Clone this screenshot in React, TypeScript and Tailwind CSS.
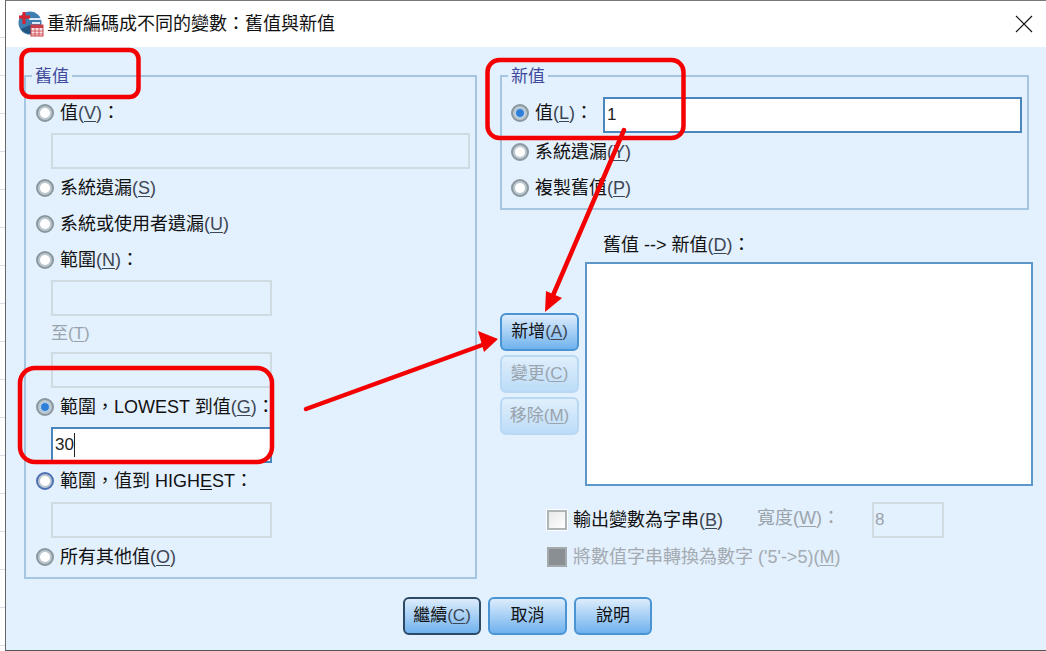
import type { ReactNode } from 'react';

const FONT = 'font-["Liberation_Sans","Noto_Sans_CJK_TC",sans-serif]';

const Mn = ({ pre, k, off }: { pre: ReactNode; k: string; off?: boolean }) => (
  <>
    {pre}
    <span className={off ? '' : 'text-[#3d4654]'}>
      (<u className="underline underline-offset-2">{k}</u>)
    </span>
  </>
);

const Radio = ({ checked, focus }: { checked?: boolean; focus?: boolean }) => (
  <span
    className={`flex h-[18px] w-[18px] shrink-0 items-center justify-center rounded-full border-2 bg-[#bcc8d0] ${
      focus ? 'border-[#4d6fb3]' : 'border-[#8b979f]'
    }`}
  >
    {checked ? (
      <span className="h-[10px] w-[10px] rounded-full border border-[#b9d5f0] bg-[#2f7fd6]" />
    ) : (
      <span className="h-[10px] w-[10px] rounded-full bg-white" />
    )}
  </span>
);

const RadioRow = ({ children, checked, focus }: { children: ReactNode; checked?: boolean; focus?: boolean }) => (
  <div className="flex h-9 items-center gap-[6px]">
    <Radio checked={checked} focus={focus} />
    <span className="whitespace-nowrap text-[18px] text-[#111]">{children}</span>
  </div>
);

const DisabledInput = ({ w = 'w-[221px]' }: { w?: string }) => (
  <div className={`ml-[15px] h-9 border-2 border-[#d0dae1] bg-[#e3f0fd] ${w}`} />
);

const Btn = ({ children, w = 'w-[79px]', off, main }: { children: ReactNode; w?: string; off?: boolean; main?: boolean }) => (
  <div
    className={`flex h-[38px] items-center justify-center rounded-[6px] text-[17px] ${w} ${
      off
        ? 'border-2 border-[#b9d8f3] bg-gradient-to-b from-[#e0effc] to-[#bcdcf8] text-[#9aa3ab]'
        : main
          ? 'border-2 border-[#2c4a66] bg-gradient-to-b from-[#dcecfb] to-[#6fb2ee] text-[#111]'
          : 'border-2 border-[#4a94d4] bg-gradient-to-b from-[#dcecfb] to-[#6fb2ee] text-[#111]'
    }`}
  >
    {children}
  </div>
);

const Group = ({ title, className, legend, children }: { title: string; className: string; legend: string; children: ReactNode }) => (
  <fieldset className={`border-2 border-[#a6c5e0] ${className}`}>
    <legend className={`px-[3px] pt-[2px] text-[17px] leading-[20px] text-[#3f4a9c] ${legend}`}>{title}</legend>
    {children}
  </fieldset>
);

const Annotations = () => (
  <svg className="pointer-events-none absolute inset-0" width="1046" height="651" viewBox="0 0 1046 651" fill="none">
    <g stroke="#f40000" strokeWidth="4.5">
      <rect x="21.5" y="50" width="117" height="47" rx="9" />
      <rect x="487.5" y="60" width="196" height="78" rx="12" />
      <rect x="20" y="368" width="252" height="94" rx="15" />
      <path d="M624 130 L551 300" strokeLinecap="round" />
      <path d="M306 409 L485 344" strokeLinecap="round" />
    </g>
    <path d="M545 312 L546 291 L562 298 Z" fill="#f40000" />
    <path d="M498 339 L478 331 L484 352 Z" fill="#f40000" />
  </svg>
);

const AppIcon = () => (
  <svg width="26" height="26" viewBox="0 0 26 26" className="shrink-0">
    <circle cx="12" cy="12" r="11.5" fill="#3f7fb0" />
    <path d="M3 18 A11.5 11.5 0 0 0 20 20 L20 14 L12 14 Z" fill="#22557f" />
    <path d="M11 8 h12 M14 12 h8" stroke="#dcebf5" strokeWidth="2" />
    <path d="M6 1 v12 M1 6 h11" stroke="#d8232f" strokeWidth="3" />
    <rect x="13" y="14" width="12" height="11" fill="#fbe3e3" stroke="#c9404a" />
    <rect x="13" y="14" width="12" height="3" fill="#c9404a" />
    <path d="M17 17 v8 M21 17 v8 M13 20 h12 M13 23 h12" stroke="#c9404a" strokeWidth="0.8" />
  </svg>
);

export default function App() {
  return (
    <div className={`relative flex h-[651px] w-[1046px] overflow-hidden bg-white ${FONT}`}>
      {/* sliver of the data sheet behind the dialog */}
      <div className="w-[5px] shrink-0 bg-[repeating-linear-gradient(to_bottom,#ffffff_0px,#ffffff_37px,#d5dde6_37px,#d5dde6_38px,#ffffff_38px,#ffffff_38px)]" />

      <div className="flex min-w-0 flex-1 flex-col border-t border-b border-l border-t-[#777] border-b-[#555] border-l-[#666]">
        <div className="flex h-[46px] shrink-0 items-center bg-white pl-[12px] pr-[13px]">
          <AppIcon />
          <span className="ml-[3px] text-[18px] text-[#111]">重新編碼成不同的變數：舊值與新值</span>
          <svg className="ml-auto" width="18" height="18" viewBox="0 0 18 18" stroke="#111" strokeWidth="1.1">
            <path d="M1 1 L17 17 M17 1 L1 17" />
          </svg>
        </div>

        <div className="flex flex-1 flex-col bg-[#e3f0fd]">
          <div className="flex gap-[23px] pl-[18px] pt-[18px]">
            <Group title="舊值" legend="-ml-[4px]" className="h-[514px] w-[453px] shrink-0 pl-[10px] pt-[8px]">
              <RadioRow><Mn pre="值" k="V" />：</RadioRow>
              <div className="mt-[2px]"><DisabledInput w="w-[419px]" /></div>
              <div className="mt-[1px]"><RadioRow><Mn pre="系統遺漏" k="S" /></RadioRow></div>
              <RadioRow><Mn pre="系統或使用者遺漏" k="U" /></RadioRow>
              <RadioRow><Mn pre="範圍" k="N" />：</RadioRow>
              <div className="mt-[2px]"><DisabledInput /></div>
              <div className="ml-[15px] flex h-9 items-center text-[17px] text-[#9aa3ab]"><Mn pre="至" k="T" off /></div>
              <DisabledInput />
              <div className="mt-[1px]"><RadioRow checked>範圍，LOWEST 到值<Mn pre="" k="G" />：</RadioRow></div>
              <div className="ml-[15px] mt-[2px] flex h-9 w-[221px] items-center border-2 border-[#4a86bd] bg-white pl-[2px] text-[17px] text-[#222]">
                30<span className="h-[24px] w-px bg-[#222]" />
              </div>
              <RadioRow focus>範圍，值到 HIGH<u className="underline underline-offset-2">E</u>ST：</RadioRow>
              <div className="mt-[3px]"><DisabledInput /></div>
              <div className="mt-[1px]"><RadioRow><Mn pre="所有其他值" k="O" /></RadioRow></div>
            </Group>

            <div className="flex w-[533px] shrink-0 flex-col">
              <Group title="新值" legend="-ml-[3px]" className="h-[145px] w-[529px] pl-[9px] pt-[8px]">
                <div className="flex h-9 items-center gap-[6px]">
                  <Radio checked />
                  <span className="w-[62px] whitespace-nowrap text-[18px] text-[#111]"><Mn pre="值" k="L" />：</span>
                  <div className="mt-[4px] flex h-9 w-[419px] items-center border-2 border-[#4a86bd] bg-white pl-[2px] text-[17px] text-[#222]">1</div>
                </div>
                <div className="mt-[3px]"><RadioRow><Mn pre="系統遺漏" k="Y" /></RadioRow></div>
                <RadioRow><Mn pre="複製舊值" k="P" /></RadioRow>
              </Group>

              <div className="flex gap-[6px]">
                <div className="flex w-[79px] shrink-0 flex-col gap-[4px] pt-[103px]">
                  <Btn><Mn pre="新增" k="A" /></Btn>
                  <Btn off><Mn pre="變更" k="C" off /></Btn>
                  <Btn off><Mn pre="移除" k="M" off /></Btn>
                </div>
                <div className="flex w-[448px] flex-col pt-[25px]">
                  <div className="h-[27px] pl-[18px] text-[18px] leading-[20px] text-[#111]">
                    舊值 --&gt; 新值<Mn pre="" k="D" />：
                  </div>
                  <div className="h-[224px] border-2 border-[#5d97c9] bg-white" />
                </div>
              </div>

              <div className="mt-[16px] flex h-9 items-center pl-[47px]">
                <span className="h-[20px] w-[20px] shrink-0 border-2 border-[#aeb5b9] bg-gradient-to-br from-[#e8e8e8] to-white outline outline-1 outline-white" />
                <span className="ml-[6px] w-[184px] text-[18px] text-[#111]"><Mn pre="輸出變數為字串" k="B" /></span>
                <span className="mb-[3px] w-[115px] text-[18px] text-[#9aa3ab]"><Mn pre="寬度" k="W" off />：</span>
                <div className="flex h-9 w-[72px] items-center border-2 border-[#d0dae1] pl-[1px] text-[17px] text-[#9aa3ab]">8</div>
              </div>
              <div className="flex h-[38px] items-center pl-[47px]">
                <span className="h-[20px] w-[20px] shrink-0 border-2 border-[#a4a9ac] bg-[#8a8f93]" />
                <span className="ml-[6px] text-[18px] text-[#a3abb2]">將數值字串轉換為數字 ('5'-&gt;5)<Mn pre="" k="M" off /></span>
              </div>
            </div>
          </div>

          <div className="mt-[18px] flex justify-center gap-[7px] pl-[3px]">
            <Btn w="w-[78px]" main><Mn pre="繼續" k="C" /></Btn>
            <Btn>取消</Btn>
            <Btn w="w-[78px]">說明</Btn>
          </div>
        </div>
      </div>

      <Annotations />
    </div>
  );
}
